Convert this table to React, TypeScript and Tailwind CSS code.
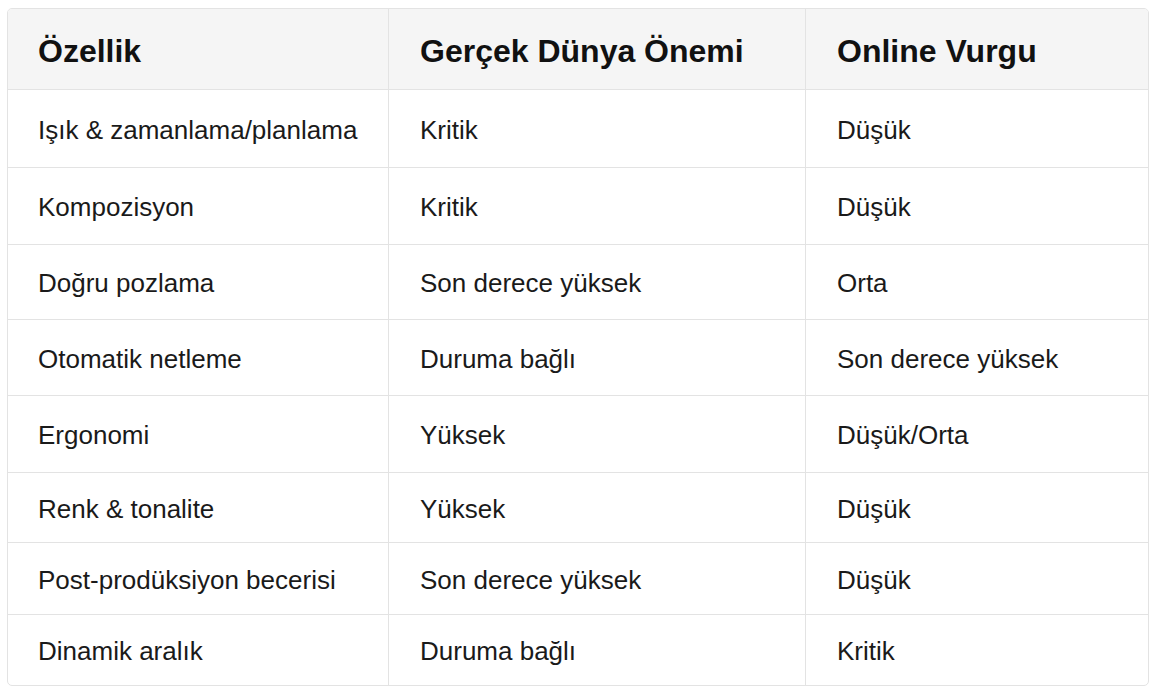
const rows = [
  { h: "h-[78px]", cells: ["Işık & zamanlama/planlama", "Kritik", "Düşük"] },
  { h: "h-[77px]", cells: ["Kompozisyon", "Kritik", "Düşük"] },
  { h: "h-[75px]", cells: ["Doğru pozlama", "Son derece yüksek", "Orta"] },
  { h: "h-[76px]", cells: ["Otomatik netleme", "Duruma bağlı", "Son derece yüksek"] },
  { h: "h-[77px]", cells: ["Ergonomi", "Yüksek", "Düşük/Orta"] },
  { h: "h-[70px]", cells: ["Renk & tonalite", "Yüksek", "Düşük"] },
  { h: "h-[72px]", cells: ["Post-prodüksiyon becerisi", "Son derece yüksek", "Düşük"] },
  { h: "h-[71px]", cells: ["Dinamik aralık", "Duruma bağlı", "Kritik"] },
];

const headers = ["Özellik", "Gerçek Dünya Önemi", "Online Vurgu"];

const colClass = [
  "w-[380px] pl-[30px]",
  "w-[417px] pl-[31px] border-l border-[#e3e3e3]",
  "flex-1 pl-[31px] border-l border-[#e3e3e3]",
];

export default function App() {
  return (
    <div className="w-[1160px] h-[693px] bg-white pt-[8px] pl-[7px] font-['Liberation_Sans',Arial,sans-serif]">
      <div className="w-[1142px] border border-[#e3e3e3] rounded-[5px] overflow-hidden">
        <div className="flex h-[80px] bg-[#f5f5f5]">
          {headers.map((t, i) => (
            <div key={t} className={`${colClass[i]} flex items-center pt-[4px] text-[32px] font-bold text-[#111]`}>
              {t}
            </div>
          ))}
        </div>
        {rows.map((row) => (
          <div key={row.cells[0]} className={`flex ${row.h} border-t border-[#e3e3e3]`}>
            {row.cells.map((t, i) => (
              <div key={i} className={`${colClass[i]} flex items-center pt-[3px] text-[26px] text-[#1a1a1a]`}>
                {t}
              </div>
            ))}
          </div>
        ))}
      </div>
    </div>
  );
}
